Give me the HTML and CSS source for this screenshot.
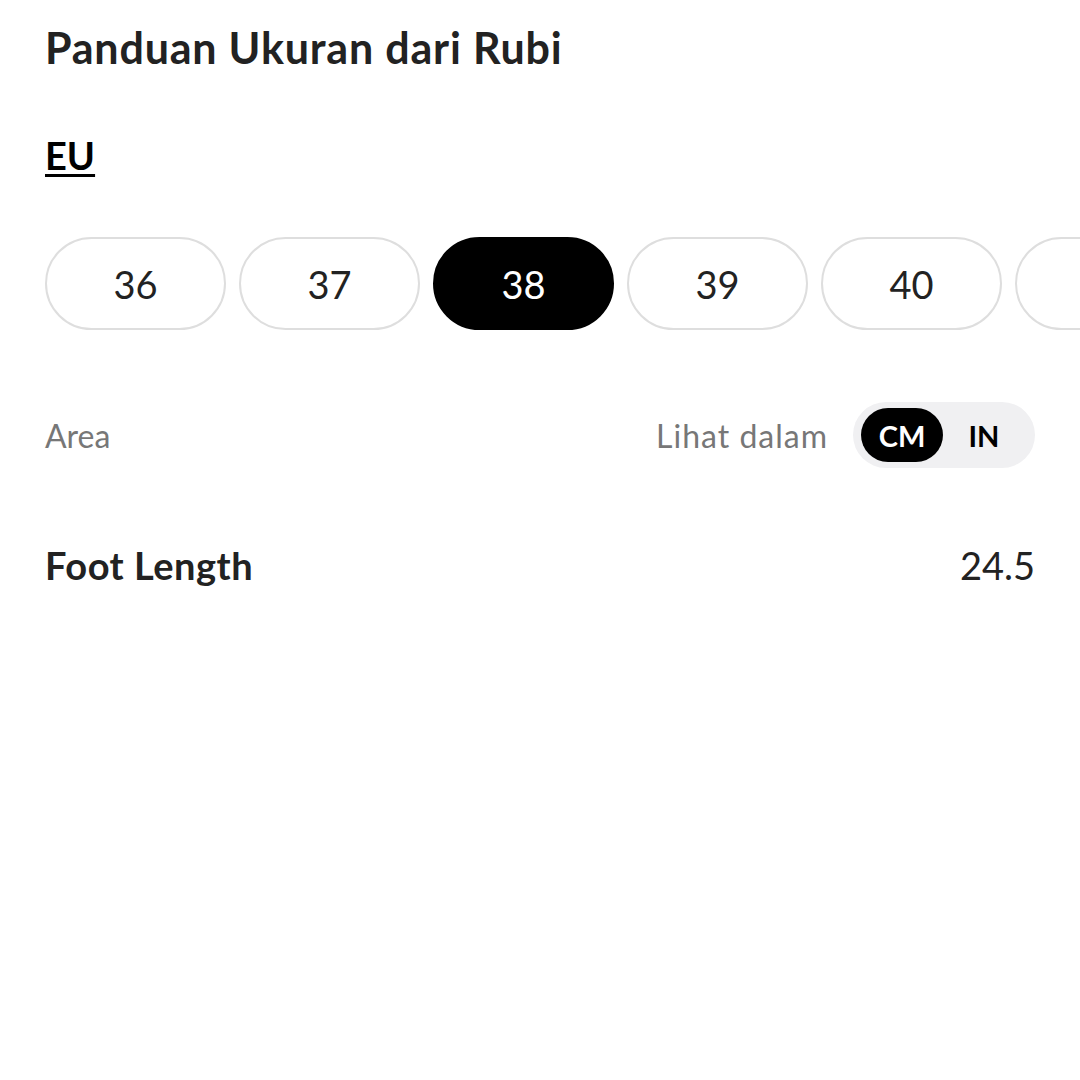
FILE: index.html
```html
<!DOCTYPE html>
<html lang="id">
<head>
    <meta charset="UTF-8">
    <meta name="viewport" content="width=device-width, initial-scale=1.0">
    <title>Panduan Ukuran</title>
    <link rel="stylesheet" href="styles.css">
</head>
<body>
    <div class="size-guide">
        <h1 class="title">Panduan Ukuran dari Rubi</h1>

        <div class="region-tabs">
            <a class="region-tab active" href="#">EU</a>
        </div>

        <div class="size-list">
            <button class="size-pill">36</button>
            <button class="size-pill">37</button>
            <button class="size-pill selected">38</button>
            <button class="size-pill">39</button>
            <button class="size-pill">40</button>
            <button class="size-pill"></button>
        </div>

        <div class="area-row">
            <span class="area-label">Area</span>
            <div class="unit-switch">
                <span class="unit-label">Lihat dalam</span>
                <div class="unit-toggle">
                    <button class="unit-btn active">CM</button>
                    <button class="unit-btn">IN</button>
                </div>
            </div>
        </div>

        <div class="measure-row">
            <span class="measure-name">Foot Length</span>
            <span class="measure-value">24.5</span>
        </div>
    </div>
</body>
</html>
```

FILE: styles.css
```css
body {
    font-family: Lato, 'Noto Sans', sans-serif;
    background-color: #fff;
    color: #222;
    margin: 0;
    padding: 0;
    overflow: hidden;
}
.size-guide {
    padding: 21px 45px 0 45px;
}
.title {
    margin: 0;
    font-size: 43px;
    font-weight: 700;
    line-height: 54px;
    letter-spacing: 0.8px;
    color: #222;
}
.region-tabs {
    margin-top: 58px;
    display: flex;
}
.region-tab {
    font-size: 38px;
    font-weight: 700;
    line-height: 44px;
    color: #000;
    text-decoration: underline;
    text-decoration-thickness: 3px;
    text-underline-offset: 4px;
}
.size-list {
    margin-top: 60px;
    display: flex;
    gap: 13px;
    margin-right: -45px;
    overflow: hidden;
}
.size-pill {
    flex: 0 0 181px;
    height: 93px;
    border: 2px solid #dedede;
    border-radius: 47px;
    background: #fff;
    font-family: inherit;
    font-size: 38px;
    font-weight: 400;
    color: #222;
    padding: 0;
}
.size-pill.selected {
    background: #000;
    border-color: #000;
    color: #fff;
}
.area-row {
    margin-top: 72px;
    display: flex;
    justify-content: space-between;
    align-items: center;
}
.area-label {
    font-size: 32px;
    color: #777;
}
.unit-switch {
    display: flex;
    align-items: center;
    gap: 25px;
}
.unit-label {
    font-size: 32px;
    letter-spacing: 1px;
    color: #777;
}
.unit-toggle {
    display: flex;
    align-items: center;
    background: #f0f0f2;
    border-radius: 33px;
    height: 66px;
    padding: 0 8px;
    box-sizing: border-box;
    width: 182px;
}
.unit-btn {
    height: 54px;
    width: 82px;
    border: none;
    border-radius: 27px;
    background: transparent;
    font-family: inherit;
    font-size: 29px;
    font-weight: 700;
    color: #000;
    padding: 0;
}
.unit-btn.active {
    background: #000;
    color: #fff;
}
.measure-row {
    margin-top: 74px;
    display: flex;
    justify-content: space-between;
    align-items: center;
    font-size: 38px;
    color: #222;
}
.measure-name {
    font-weight: 700;
    letter-spacing: 0.5px;
}
```
